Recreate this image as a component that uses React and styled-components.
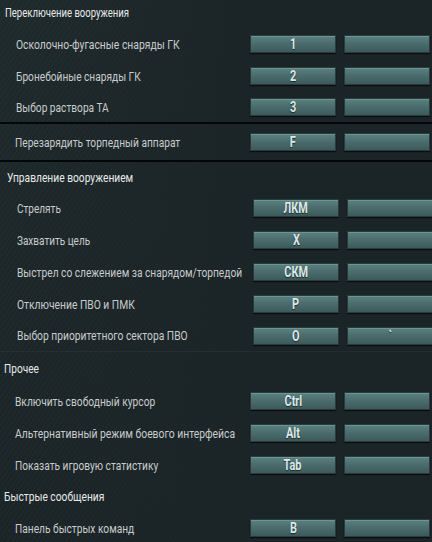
import React, { useLayoutEffect, useRef, useState } from "react";
import styled, { createGlobalStyle } from "styled-components";

const Global = createGlobalStyle`
  html, body { margin: 0; padding: 0; background: #1b2427; }
  body { width: 432px; height: 542px; overflow: hidden; }
  #root { width: 432px; }
`;

const Page = styled.div`
  width: 432px;
  height: 542px;
  overflow: hidden;
  position: relative;
  font-family: "Roboto", "DejaVu Sans Condensed", sans-serif;
  font-size: 13px;
  background:
    linear-gradient(90deg, rgba(27,36,39,0) 0%, rgba(27,36,39,0.6) 40%, #1b2427 60%),
    repeating-linear-gradient(-55deg, rgba(255,255,255,0.025) 0 1px, rgba(0,0,0,0) 1px 4px),
    linear-gradient(180deg, #1f2a2d 0%, #1b2427 100%);
`;

const Section = styled.section`
  display: flex;
  flex-direction: column;
  padding-left: ${(p) => p.$shift || 0}px;
  margin-right: ${(p) => -(p.$shift || 0)}px;
`;

const Header = styled.div`
  height: ${(p) => p.$h}px;
  display: flex;
  align-items: center;
  padding-left: ${(p) => p.$pad ?? 5}px;
  color: #e8eaea;
  padding-bottom: ${(p) => p.$lift || 0}px;
  box-sizing: border-box;
`;

const Narrow = styled.span`
  display: inline-block;
  white-space: nowrap;
  transform-origin: left center;
`;

function Fit({ w, children }) {
  const ref = useRef(null);
  const [sx, setSx] = useState(0.85);
  useLayoutEffect(() => {
    if (ref.current && w) {
      const nat = ref.current.offsetWidth;
      if (nat > 0) setSx(w / nat);
    }
  }, [w, children]);
  return (
    <Narrow ref={ref} style={{ transform: `scaleX(${sx})` }}>
      {children}
    </Narrow>
  );
}

const Row = styled.div`
  height: ${(p) => p.$h || 32}px;
  display: flex;
  align-items: center;
  padding-left: ${(p) => p.$pad ?? 16}px;
  padding-right: 2px;
  box-sizing: border-box;
`;

const Label = styled.div`
  flex: 1;
  min-width: 0;
  color: #c8cccc;
  white-space: nowrap;
`;

const Keys = styled.div`
  display: flex;
  gap: 8px;
  flex-shrink: 0;
`;

const Key = styled.div`
  width: 86px;
  height: 18px;
  box-sizing: border-box;
  border: 1px solid #2a3b3c;
  background: linear-gradient(180deg, #5c8081 0%, #4b6d6e 45%, #3d5a5b 100%);
  box-shadow: inset 0 1px 0 rgba(150, 190, 190, 0.35), 0 1px 1px rgba(0,0,0,0.6);
  display: flex;
  align-items: center;
  justify-content: center;
  color: #dde8e8;
  font-weight: bold;
  font-size: 14px;
  text-shadow: 0 1px 1px rgba(0,0,0,0.6);
  line-height: 1;
`;

const KeyText = styled.span`
  display: inline-block;
  transform: scaleX(0.78);
`;

const Divider = styled.div`
  height: 2px;
  background: #040707;
`;

const Faint = styled.div`
  height: 1px;
  background: rgba(255,255,255,0.04);
`;

function Binding({ label, w, k, alt = "", pad, h }) {
  return (
    <Row $pad={pad} $h={h}>
      <Label><Fit w={w}>{label}</Fit></Label>
      <Keys>
        <Key><KeyText>{k}</KeyText></Key>
        <Key><KeyText>{alt}</KeyText></Key>
      </Keys>
    </Row>
  );
}

export default function App() {
  return (
    <Page>
      <Global />
      <Section>
        <Header $h={28} $lift={4}><Fit w={124}>Переключение вооружения</Fit></Header>
        <Binding label="Осколочно-фугасные снаряды ГК" w={164} k="1" />
        <Binding label="Бронебойные снаряды ГК" w={125} k="2" />
        <Binding label="Выбор раствора ТА" w={93} k="3" h={30} />
        <Divider />
        <Binding label="Перезарядить торпедный аппарат" w={165} k="F" pad={15} h={36} />
        <Divider />
      </Section>
      <Section $shift={3}>
        <Header $h={30} $pad={4}><Fit w={126}>Управление вооружением</Fit></Header>
        <Binding label="Стрелять" w={44} k="ЛКМ" pad={14} />
        <Binding label="Захватить цель" w={73} k="X" pad={14} />
        <Binding label="Выстрел со слежением за снарядом/торпедой" w={225} k="СКМ" pad={14} />
        <Binding label="Отключение ПВО и ПМК" w={118} k="P" pad={14} />
        <Binding label="Выбор приоритетного сектора ПВО" w={171} k="O" alt="`" pad={14} h={31} />
      </Section>
      <Faint />
      <Section>
        <Header $h={33} $pad={4}><Fit w={35}>Прочее</Fit></Header>
        <Binding label="Включить свободный курсор" w={140} k="Ctrl" pad={15} />
        <Binding label="Альтернативный режим боевого интерфейса" w={220} k="Alt" pad={15} />
        <Binding label="Показать игровую статистику" w={143} k="Tab" pad={15} />
        <Header $h={31} $pad={4}><Fit w={100}>Быстрые сообщения</Fit></Header>
        <Binding label="Панель быстрых команд" w={119} k="B" pad={15} />
      </Section>
    </Page>
  );
}
